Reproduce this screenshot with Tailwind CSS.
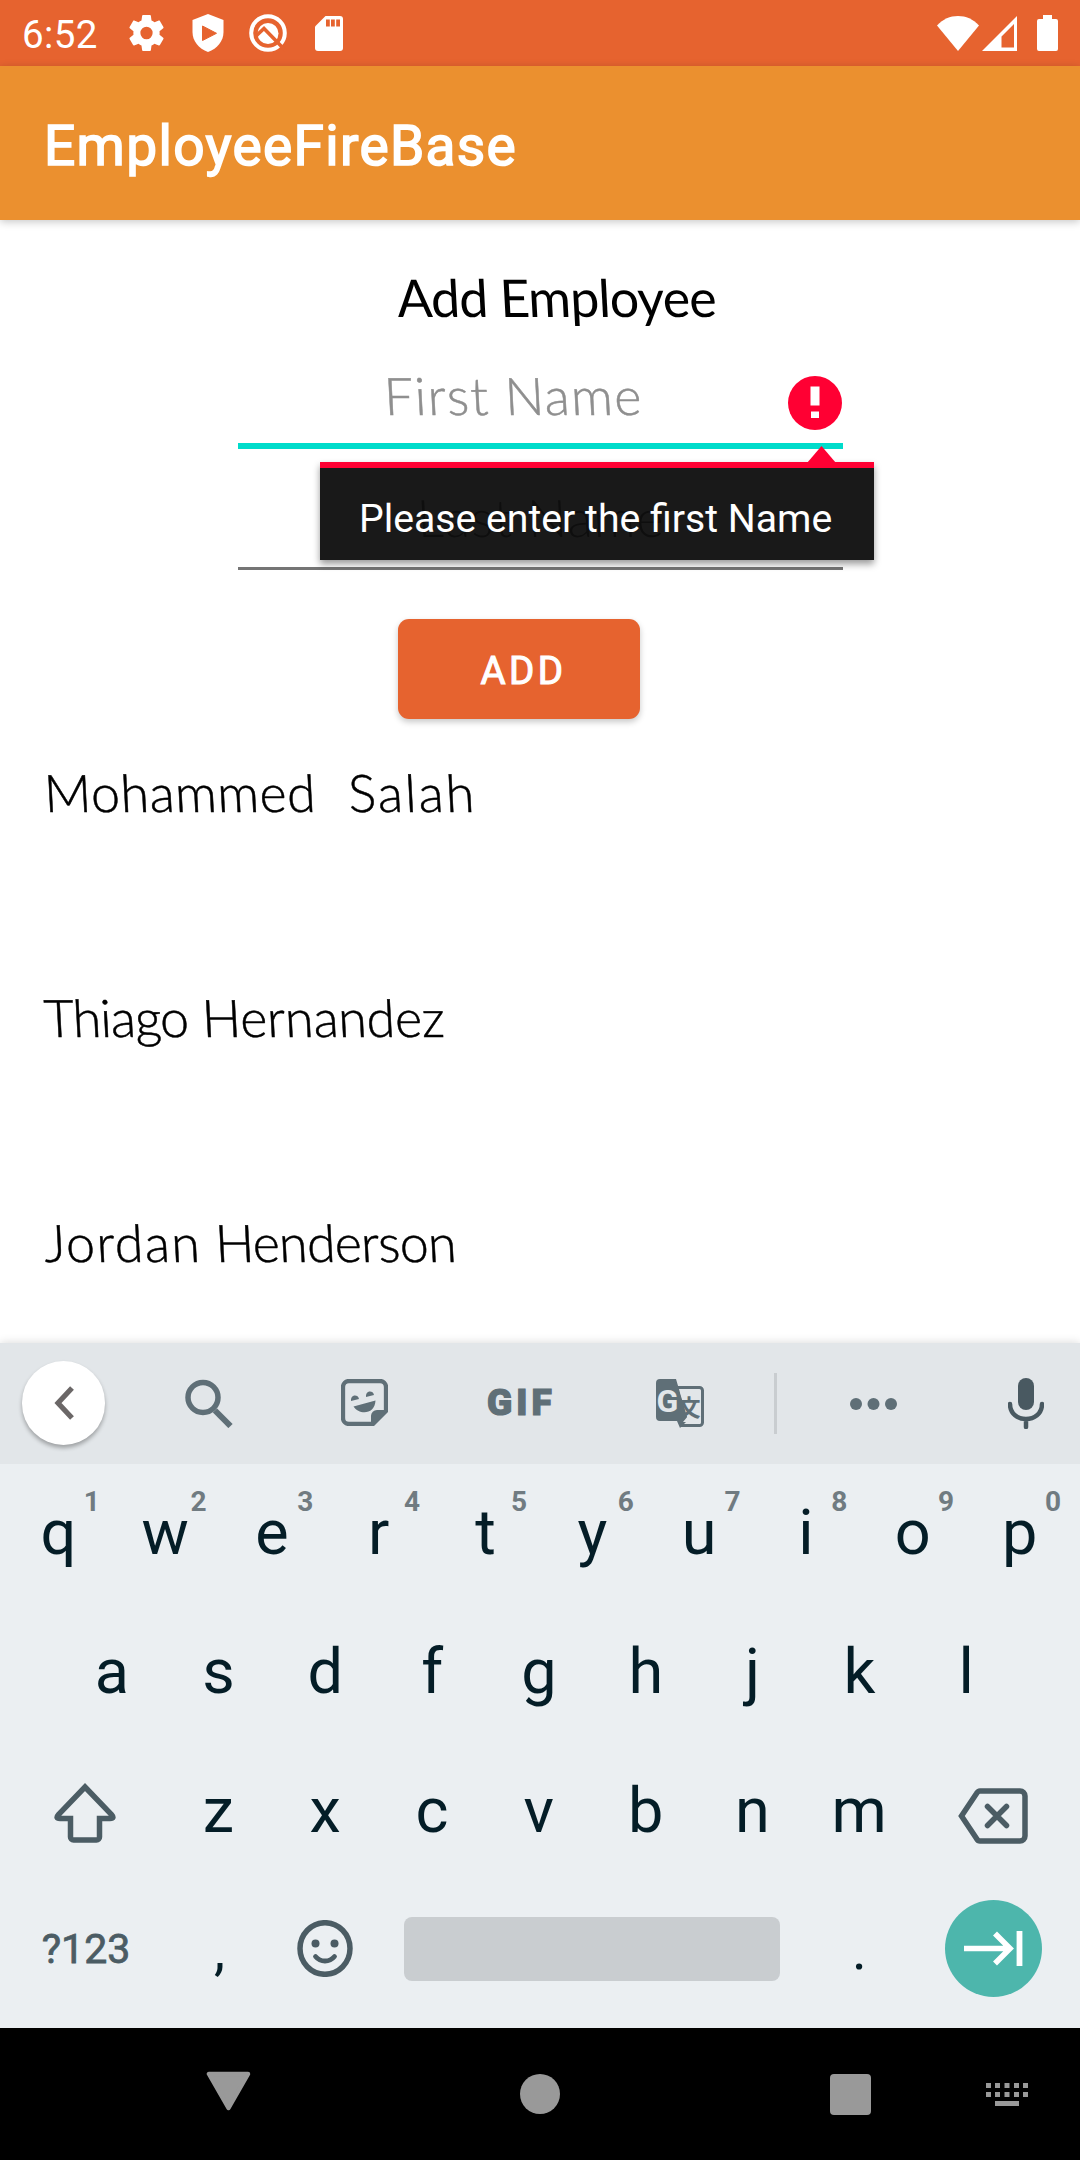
<!DOCTYPE html>
<html lang="en">
<head>
<meta charset="utf-8">
<title>EmployeeFireBase</title>
<script src="https://cdn.jsdelivr.net/npm/@tailwindcss/browser@4"></script>
</head>
<body class="w-[1080px] h-[2160px] overflow-hidden bg-white flex flex-col font-[Roboto,sans-serif]">

<!-- Status bar -->
<header class="h-[66px] shrink-0 bg-[#e6632f] text-white flex items-center pl-[22px] pr-[22px]">
  <span class="w-[107px] text-[38.5px] leading-[66px] pt-[3px] tracking-[0.4px]">6:52</span>
  <svg class="w-[35px] h-[36px]" viewBox="2 2 20 20" fill="#fff" preserveAspectRatio="none"><path d="M19.43 12.98c.04-.32.07-.64.07-.98s-.03-.66-.07-.98l2.11-1.65c.19-.15.24-.42.12-.64l-2-3.46c-.12-.22-.39-.3-.61-.22l-2.49 1c-.52-.4-1.08-.73-1.69-.98l-.38-2.65A.488.488 0 0 0 14 2h-4c-.25 0-.46.18-.49.42l-.38 2.65c-.61.25-1.17.59-1.69.98l-2.49-1c-.23-.09-.49 0-.61.22l-2 3.46c-.13.22-.07.49.12.64l2.11 1.65c-.04.32-.07.65-.07.98s.03.66.07.98l-2.11 1.65c-.19.15-.24.42-.12.64l2 3.46c.12.22.39.3.61.22l2.49-1c.52.4 1.08.73 1.69.98l.38 2.65c.03.24.24.42.49.42h4c.25 0 .46-.18.49-.42l.38-2.65c.61-.25 1.17-.59 1.69-.98l2.49 1c.23.09.49 0 .61-.22l2-3.46c.12-.22.07-.49-.12-.64l-2.11-1.65zM12 15.5a3.5 3.5 0 1 1 0-7 3.5 3.5 0 0 1 0 7z"/></svg>
  <svg class="w-[32px] h-[38px] ml-[28px]" viewBox="0 0 32 38"><path d="M16 0L31.500 6v12c0 9-6 16.500-15.500 20C6.500 34.500.500 27 .500 18V6z" fill="#fff"/><path d="M10.500 12v14.500l14-7.200z" fill="#e6632f" stroke="#e6632f" stroke-width="1" stroke-linejoin="round"/></svg>
  <svg class="w-[38px] h-[38px] ml-[25px]" viewBox="0 0 38 38" fill="none"><circle cx="19" cy="19" r="16.800" stroke="#fff" stroke-width="4"/><circle cx="19" cy="19.500" r="10.500" fill="#fff"/><path d="M7 22l8-7.500L37 37" stroke="#e6632f" stroke-width="3.600"/></svg>
  <svg class="w-[28px] h-[35px] ml-[28px]" viewBox="0 0 28 35"><path d="M10.500 0H25a3 3 0 0 1 3 3v29a3 3 0 0 1-3 3H3a3 3 0 0 1-3-3V10.500z" fill="#fff"/><path d="M11 3.500h3.800v7H11zM16 3.500h3.800v7H16zM21.200 3.500H25v7h-3.800z" fill="#e6632f"/></svg>
  <svg class="w-[42px] h-[35px] ml-auto" viewBox="0 0 42 35"><path d="M0 9.500C6 3 13 0 21 0s15 3 21 9.500L21 35z" fill="#fff"/></svg>
  <svg class="w-[35px] h-[35px] ml-[3px]" viewBox="0 0 35 35"><path d="M35 0v35H0zM32 8L19.500 20.500v11H32z" fill="#fff" fill-rule="evenodd"/></svg>
  <svg class="w-[21px] h-[36px] ml-[20px]" viewBox="0 0 21 36"><path d="M6 0h9v4h4a2 2 0 0 1 2 2v28a2 2 0 0 1-2 2H2a2 2 0 0 1-2-2V6a2 2 0 0 1 2-2h4z" fill="#fff"/></svg>
</header>

<!-- App bar -->
<div class="h-[154px] shrink-0 bg-[#eb902f] flex items-center px-[44px] shadow-[0_2px_8px_rgba(0,0,0,0.22)]">
  <h1 class="text-[55px] leading-[64px] pt-[6px] text-white tracking-[1.35px] [-webkit-text-stroke:1.6px_#fff]">EmployeeFireBase</h1>
</div>

<!-- Form and employee list -->
<main class="relative h-[1123px] shrink-0 overflow-hidden font-[Coming_Soon,Lato,sans-serif] text-[52px] leading-[60px] text-black font-light">
  <div class="pt-[47px] h-[107px] flex justify-center pl-[33px]"><h2 class="font-normal skew-x-3 tracking-[-0.9px]">Add Employee</h2></div>
  <div class="ml-[238px] w-[605px] h-[122px] border-b-[6px] border-[#00dccb] flex items-start pt-[38px]">
    <span class="ml-[146px] skew-x-3 text-[#8f8f8f] tracking-[1.3px] [-webkit-text-stroke:0.5px_#8f8f8f]">First Name</span>
    <svg class="w-[54px] h-[54px] mt-[11px] mr-[1px] ml-auto" viewBox="0 0 54 54"><circle cx="27" cy="27" r="27" fill="#ff0033"/><path d="M22.500 10.500h9v19h-9zM23 35.500h8v6.500h-8z" fill="#fff"/></svg>
  </div>
  <div class="ml-[238px] w-[605px] h-[121px] border-b-[3px] border-[#757575] pt-[38px]">
    <span class="ml-[179px] inline-block skew-x-3 text-[#8f8f8f] tracking-[1px]">Last Name</span>
  </div>
  <button class="mt-[49px] ml-[398px] block w-[242px] h-[100px] rounded-[11px] bg-[#e6632f] text-white font-[Roboto,sans-serif] font-normal text-[38.5px] tracking-[3.4px] pt-[3px] pl-[9px] [-webkit-text-stroke:1.1px_#fff] shadow-[0_3px_6px_rgba(0,0,0,0.22)]">ADD</button>
  <ul class="pl-[44px] pt-[43px] [-webkit-text-stroke:0.5px_#000]">
    <li class="h-[225px]"><span class="inline-block skew-x-3 whitespace-pre"><span class="tracking-[0.4px]">Mohammed</span><span class="tracking-[2px]">  Salah</span></span></li>
    <li class="h-[225px]"><span class="inline-block skew-x-3"><span class="tracking-[-1.1px]">Thiago</span> <span class="tracking-[-0.3px]">Hernandez</span></span></li>
    <li class="h-[225px]"><span class="inline-block skew-x-3"><span class="tracking-[1.3px]">Jordan</span> <span class="tracking-[-0.8px]">Henderson</span></span></li>
  </ul>

  <!-- Validation popup -->
  <div class="absolute left-[320px] top-[242px] w-[554px] h-[98px] border-t-[6px] border-[#ff0033] bg-black/90 shadow-[0_4px_7px_rgba(0,0,0,0.4)] text-white font-[Roboto,sans-serif] font-normal text-[39.2px] leading-[46px] pt-[28px] pl-[39px] whitespace-nowrap">
    <svg class="absolute -top-[22px] left-[487px] w-[29px] h-[17px]" viewBox="0 0 29 17"><path d="M14.500 0L29 17H0z" fill="#ff0033"/></svg>
    Please enter the first Name
  </div>
</main>

<!-- Keyboard -->
<section class="relative h-[685px] shrink-0 bg-[#ebeff2] text-[#041d27] shadow-[0_0_9px_rgba(0,0,0,0.16)]">
  <div class="h-[121px] bg-[#e2e6e9] flex items-center">
    <div class="ml-[22px] -mt-[2px] w-[83px] h-[84px] rounded-full bg-white shadow-[0_3px_4px_rgba(0,0,0,0.3)] flex items-center justify-center"><svg class="w-[20px] h-[34px] ml-[1px]" viewBox="0 0 20 34"><path d="M18 2L4 17l14 15" fill="none" stroke="#6b6767" stroke-width="5.200"/></svg></div>
    <svg class="ml-[80px] w-[48px] h-[49px]" viewBox="0 0 48 49" fill="none" stroke="#5f6f77"><circle cx="18" cy="18.500" r="15" stroke-width="5.500"/><path d="M30 31.500L45.500 47" stroke-width="6"/></svg>
    <svg class="ml-[108px] w-[47px] h-[47px] -mt-[2px]" viewBox="0 0 47 47"><path d="M8 2h31a6 6 0 0 1 6 6v24L32 45H8a6 6 0 0 1-6-6V8a6 6 0 0 1 6-6z" fill="none" stroke="#5f6f77" stroke-width="4.300"/><path d="M30 46V37a6 6 0 0 1 6-6h10zM10 22a4 4.500 0 0 1 8-2zM25 18a4 4.500 0 0 1 8-2zM12.500 27.500L34.500 21.500C34 36 18 36 12.500 27.500z" fill="#5f6f77"/></svg>
    <span class="ml-[99px] w-[67px] font-black text-[37px] leading-[46px] tracking-[4px] text-[#5f6f77] [-webkit-text-stroke:1.2px_#5f6f77] -mt-[1px]">GIF</span>
    <svg class="ml-[102px] w-[48px] h-[49px]" viewBox="0 0 48 49"><path d="M18 8.500h25.500a3 3 0 0 1 3 3v32a3 3 0 0 1-3 3H24" fill="none" stroke="#5f6f77" stroke-width="3"/><path d="M4 0h16l12 41-8 8-3-7H4a4 4 0 0 1-4-4V4a4 4 0 0 1 4-4z" fill="#5f6f77"/><path d="M24 12h17l3 3v28H27l5-6-8-24z" fill="#e2e6e9"/><text x="0.500" y="33" font-family="Roboto" font-weight="700" font-size="32" fill="#e2e6e9">G</text><text x="21.500" y="37" font-family="Noto Sans CJK JP" font-weight="700" font-size="23" fill="#5f6f77">文</text></svg>
    <div class="ml-[70px] w-[3px] h-[61px] bg-[#c9cdd0]"></div>
    <svg class="ml-[73px] w-[48px] h-[12px]" viewBox="0 0 48 12" fill="#5f6f77"><circle cx="6" cy="6" r="6"/><circle cx="23.500" cy="6" r="6"/><circle cx="41" cy="6" r="6"/></svg>
    <svg class="ml-[110px] w-[36px] h-[51px]" viewBox="0 0 36 51"><rect x="10" y="0" width="16" height="32" rx="8" fill="#495961"/><path d="M2 26c0 20 32 20 32 0M18 41v8" fill="none" stroke="#495961" stroke-width="4.500" stroke-linecap="round"/></svg>
  </div>
  <div id="keys"></div>
  <div class="flex items-center h-[139px] pl-[6px] pt-[2px] leading-[139px]">
    <div class="w-[160px] h-full flex items-center justify-center text-[41px] text-[#4b5c64] [-webkit-text-stroke:0.8px_#4b5c64] pb-[2px]">?123</div>
    <div class="w-[107px] text-center text-[56px]">,</div>
    <svg class="w-[56px] h-[57px] ml-[24px] mr-[26px] -mt-[4px]" viewBox="0 0 56 57" fill="none" stroke="#4b5c64"><ellipse cx="28" cy="28.500" rx="25" ry="25.800" stroke-width="5.500"/><path d="M18.500 36.500c5 6 14 6 19 0" stroke-width="4.800" stroke-linecap="round"/><circle cx="18.500" cy="23.500" r="4" fill="#4b5c64" stroke="none"/><circle cx="37.500" cy="23.500" r="4" fill="#4b5c64" stroke="none"/></svg>
    <div class="ml-[25px] w-[376px] h-[64px] -mt-[4px] rounded-[8px] bg-[#c9cdd0]"></div>
    <div class="ml-[26px] w-[107px] text-center text-[56px]">.</div>
    <div class="ml-[32px] w-[97px] h-[97px] -mt-[5px] rounded-full bg-[#4db6ac] flex items-center justify-center"><svg class="w-[59px] h-[35px]" viewBox="0 0 59 35" fill="none" stroke="#fff"><path d="M0 17.500h46M31 2.500l15 15-15 15" stroke-width="5.600"/><path d="M55.500 0v35" stroke-width="5.800"/></svg></div>
  </div>
</section>

<!-- Navigation bar -->
<nav class="h-[132px] shrink-0 bg-black flex items-center">
  <svg class="ml-[206px] w-[45px] h-[40px] -mt-[7px]" viewBox="0 0 45 40"><path d="M3 3h39L22.500 37z" fill="#999" stroke="#999" stroke-width="4.500" stroke-linejoin="round"/></svg>
  <div class="ml-[269px] w-[40px] h-[40px] rounded-full bg-[#999]"></div>
  <div class="ml-[270px] w-[41px] h-[41px] rounded-[4px] bg-[#999]"></div>
  <svg class="ml-[115px] w-[42px] h-[23px]" viewBox="0 0 42 23" fill="#999"><path d="M0 0h5v5H0zM9 0h5v5H9zM18.500 0h5v5h-5zM28 0h5v5h-5zM37 0h5v5h-5zM0 9h5v5H0zM9 9h5v5H9zM18.500 9h5v5h-5zM28 9h5v5h-5zM37 9h5v5h-5zM9 18h24v5H9z"/></svg>
</nav>

<script>
  const key = (c, n) => `<div class="relative w-[106.8px] h-full text-center text-[63px] leading-[138px]">${c}${n ? `<span class="absolute right-[12px] top-[21px] text-[28px] leading-[34px] font-bold text-[#707b81]">${n}</span>` : ''}</div>`;
  const nums = '1234567890';
  const shift = `<div class="w-[160px] flex justify-center"><svg class="w-[62px] h-[60px] mt-[3px]" viewBox="0 0 62 60" fill="none"><path d="M31 4L57.500 31.500Q61 35.500 56 35.500H45.500V54a3 3 0 0 1-3 3h-23a3 3 0 0 1-3-3V35.500H6Q1 35.500 4.500 31.500z" stroke="#4b5c64" stroke-width="5.500"/></svg></div>`;
  const del = `<div class="w-[160px] flex justify-center"><svg class="w-[70px] h-[56px] mt-[10px]" viewBox="0 0 70 56" fill="none" stroke="#4b5c64"><path d="M22 3h40a5 5 0 0 1 5 5v40a5 5 0 0 1-5 5H22q-2 0-3.500-2.500L3.500 28l15-22.500Q20 3 22 3z" stroke-width="5.500"/><path d="M29.500 18.500l19 19M48.500 18.500l-19 19" stroke-width="5.500" stroke-linecap="round"/></svg></div>`;
  document.getElementById('keys').innerHTML =
    `<div class="flex h-[139px] pl-[5px]">${[...'qwertyuiop'].map((c, i) => key(c, nums[i])).join('')}</div>` +
    `<div class="flex h-[139px] pl-[58.4px]">${[...'asdfghjkl'].map(c => key(c)).join('')}</div>` +
    `<div class="flex items-center h-[138px] pl-[5px]">${shift}${[...'zxcvbnm'].map(c => key(c)).join('')}${del}</div>`;
</script>
</body>
</html>
